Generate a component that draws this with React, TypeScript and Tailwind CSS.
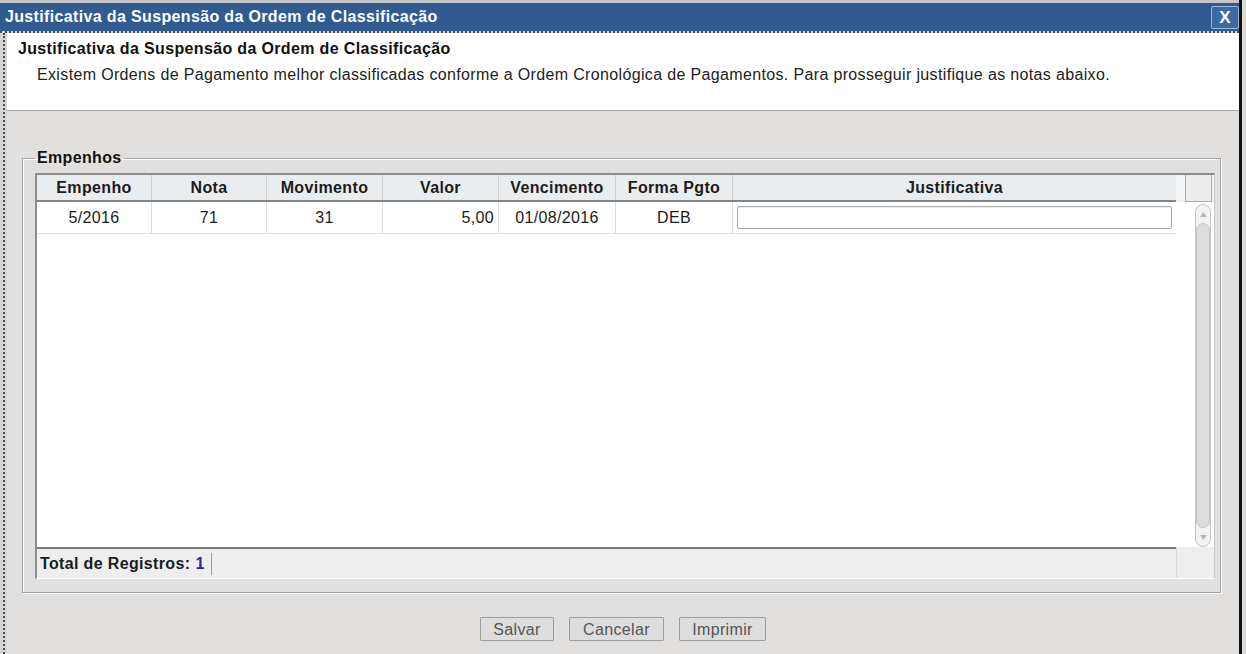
import React from "react";

const cols = [
  { label: "Empenho", value: "5/2016", align: "center" },
  { label: "Nota", value: "71", align: "center" },
  { label: "Movimento", value: "31", align: "center" },
  { label: "Valor", value: "5,00", align: "right" },
  { label: "Vencimento", value: "01/08/2016", align: "center" },
  { label: "Forma Pgto", value: "DEB", align: "center" },
];

function ScrollBar() {
  return (
    <div className="ml-[19px] mt-[2px] w-[16px] flex-1 flex flex-col rounded-[8px] border border-[#c4c4c4] bg-[#f3f3f3]">
      <div className="h-[18px] flex items-center justify-center">
        <svg width="7" height="5" viewBox="0 0 7 5">
          <path d="M0 5 L3.5 0 L7 5 Z" fill="#b8b8b8" />
        </svg>
      </div>
      <div className="flex-1 rounded-[8px] border border-[#c6c6c6] bg-[#dcdcdc]" />
      <div className="h-[18px] flex items-center justify-center">
        <svg width="7" height="5" viewBox="0 0 7 5">
          <path d="M0 0 L3.5 5 L7 0 Z" fill="#b8b8b8" />
        </svg>
      </div>
    </div>
  );
}

export default function App() {
  return (
    <div className="w-[1246px] h-[654px] flex overflow-hidden bg-[#c6c6c6] font-['Liberation_Sans',Arial,sans-serif] text-[16px] tracking-[0.35px] text-[#1c1c1c]">
      <div className="w-[1239px] flex flex-col pt-[3px]">
        {/* Title bar */}
        <div className="h-[28px] flex items-center justify-between bg-[#2f5b91] pl-[5px]">
          <span className="text-white font-bold">Justificativa da Suspensão da Ordem de Classificação</span>
          <div className="w-[28px] h-[23px] flex items-center justify-center border border-[#9fb5d0] bg-[#3a6aa3] rounded-[2px] text-white font-bold text-[17px] leading-none tracking-normal">
            X
          </div>
        </div>

        {/* Body */}
        <div className="flex-1 flex border-t-2 border-dotted border-[#4d4d4d] bg-[#d5d5d5]">
          <div className="w-[7px] shrink-0 flex justify-center">
            <div className="border-l-2 border-dotted border-[#4d4d4d]" />
          </div>

          <div className="flex-1 flex flex-col bg-[#e1e0de]">
            {/* Header message */}
            <div className="h-[78px] bg-white border-b border-[#9e9e9e] pl-[11px] pt-[6px]">
              <div className="font-bold leading-[20px] text-[#111]">Justificativa da Suspensão da Ordem de Classificação</div>
              <div className="pl-[19px] mt-[6px] leading-[20px] text-[#222]">
                Existem Ordens de Pagamento melhor classificadas conforme a Ordem Cronológica de Pagamentos. Para prosseguir justifique as notas abaixo.
              </div>
            </div>

            {/* Fieldset */}
            <fieldset className="mt-[38px] ml-[15px] mr-[18px] pl-[12px] pr-[5px] pt-[6px] pb-[13px] border border-[#a3a3a3] shadow-[inset_1px_1px_0_#fff,1px_1px_0_#fff]">
              <legend className="px-[2px] font-bold leading-[18px] text-[#111]">Empenhos</legend>

              <div className="flex flex-col border-t-2 border-l-2 border-[#8c8c8c] border-r border-b border-r-[#c9c9c9] border-b-white bg-white">
                <div className="h-[372px] flex">
                  {/* Grid */}
                  <div className="w-[1139px] flex flex-col">
                    <div className="h-[27px] grid grid-cols-[115px_115px_116px_116px_117px_117px_443px] bg-[#eaedf0] border-b-2 border-[#858585]">
                      {cols.map((c) => (
                        <div key={c.label} className="flex items-center justify-center font-bold border-r border-[#d0d0d0]">
                          {c.label}
                        </div>
                      ))}
                      <div className="flex items-center justify-center font-bold">Justificativa</div>
                    </div>
                    <div className="h-[32px] grid grid-cols-[115px_115px_116px_116px_117px_117px_443px] border-b border-[#e0e0e0]">
                      {cols.map((c) => (
                        <div
                          key={c.label}
                          className={
                            c.align === "right"
                              ? "flex items-center justify-end pr-[4px] border-r border-[#dedede]"
                              : "flex items-center justify-center border-r border-[#dedede]"
                          }
                        >
                          {c.value}
                        </div>
                      ))}
                      <div className="flex items-center px-[4px]">
                        <div className="w-full h-[23px] border border-[#a9a9a9] rounded-[2px] bg-white shadow-[inset_0_1px_1px_rgba(0,0,0,0.08)]" />
                      </div>
                    </div>
                  </div>

                  {/* Scroll column */}
                  <div className="flex-1 flex flex-col">
                    <div className="h-[27px] flex bg-[#f4f4f4]">
                      <div className="ml-[9px] w-[27px] bg-[#ececec] border border-[#ababab] border-t-0" />
                    </div>
                    <ScrollBar />
                  </div>
                </div>

                {/* Footer */}
                <div className="h-[31px] flex bg-[#eeeeee]">
                  <div className="w-[1139px] flex items-center border-t-2 border-[#7c7c7c] pl-[3px]">
                    <span className="font-bold text-[#1c1c1c]">Total de Registros:</span>
                    <span className="font-bold text-[#2626a6] ml-[5px]">1</span>
                    <div className="ml-[6px] w-px h-[22px] bg-[#9a9a9a]" />
                  </div>
                  <div className="flex-1 border-l border-[#d9d9d9]" />
                </div>
              </div>
            </fieldset>

            {/* Buttons */}
            <div className="mt-[24px] flex justify-center gap-[15px]">
              <button className="w-[74px] h-[24px] border border-[#9c9c9c] bg-[#dddddd] text-[#555] rounded-[1px]">Salvar</button>
              <button className="w-[95px] h-[24px] border border-[#9c9c9c] bg-[#dddddd] text-[#555] rounded-[1px]">Cancelar</button>
              <button className="w-[87px] h-[24px] border border-[#9c9c9c] bg-[#dddddd] text-[#555] rounded-[1px]">Imprimir</button>
            </div>
          </div>
        </div>
      </div>

      <div className="w-[3px] bg-[#111]" />
      <div className="flex-1 bg-[#d8d8d8]" />
    </div>
  );
}
